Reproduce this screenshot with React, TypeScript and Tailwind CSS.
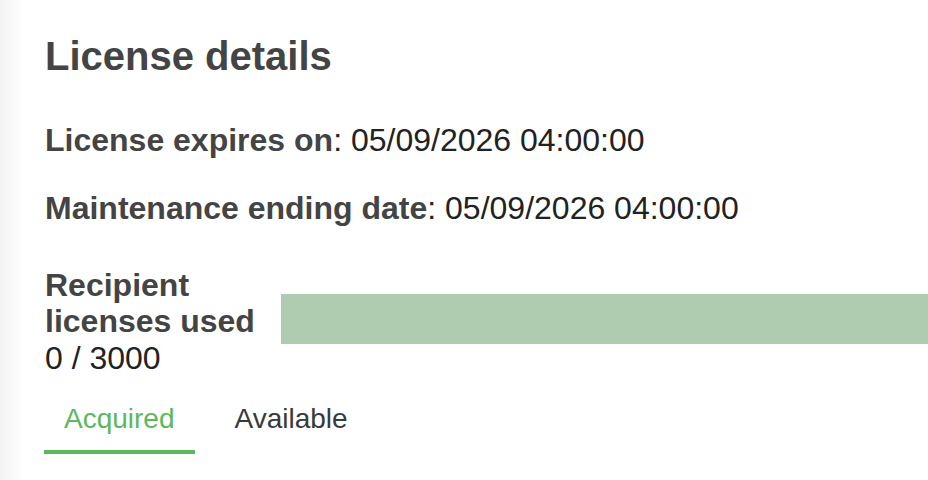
import { useState } from 'react';

const tabs = ['Acquired', 'Available'];

export default function App() {
    const [active, setActive] = useState('Acquired');
    const used = 0;
    const total = 3000;

    return (
        <div
            className="min-h-[480px] w-full bg-[linear-gradient(to_right,#f3f3f3,#ffffff_26px)] pl-[45px] pt-[33px] text-[#222]"
            style={{ fontFamily: '"Liberation Sans", Arial, Helvetica, sans-serif' }}
        >
            <h1 className="text-[40px] leading-[46px] font-bold text-[#444]">License details</h1>

            {/* Dates */}
            <p className="mt-[43px] text-[32px] leading-[36.8px]">
                <span className="font-bold text-[#444]">License expires on</span>: 05/09/2026 04:00:00
            </p>
            <p className="mt-[31px] text-[32px] leading-[36.8px]">
                <span className="font-bold text-[#444]">Maintenance ending date</span>: 05/09/2026 04:00:00
            </p>

            {/* Usage */}
            <div className="mt-[40px] flex items-start">
                <div className="w-[236px] shrink-0 text-[32px] leading-[36.8px]">
                    <div className="font-bold text-[#444]">Recipient licenses used</div>
                    <div>
                        {used} / {total}
                    </div>
                </div>
                <div className="mt-[27px] h-[50px] flex-1 bg-[#afccb1]" />
            </div>

            {/* Tabs */}
            <div className="mt-[24px] -ml-px flex gap-[20px]">
                {tabs.map(t => (
                    <button
                        key={t}
                        onClick={() => setActive(t)}
                        className={`px-[20px] pt-[2px] pb-[15px] text-[28px] leading-[32.2px] border-b-4 ${
                            active === t ? 'border-[#5cb85c] text-[#5cb85c]' : 'border-transparent text-[#3a3a3a]'
                        }`}
                    >
                        {t}
                    </button>
                ))}
            </div>
        </div>
    );
}
